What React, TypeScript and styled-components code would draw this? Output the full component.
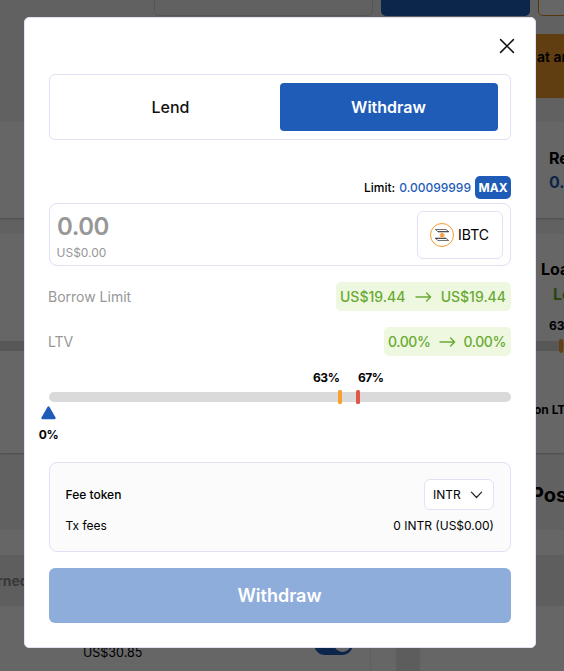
import React from "react";
import styled, { createGlobalStyle } from "styled-components";

const Global = createGlobalStyle`
  * { box-sizing: border-box; }
  html, body { margin: 0; padding: 0; overflow: hidden; }
  body { font-family: Inter, "Liberation Sans", sans-serif; color: #000; -webkit-font-smoothing: antialiased; }
  button { font-family: inherit; border: 0; padding: 0; margin: 0; background: none; color: inherit; }
`;

const blue = "#1f5cb8";
const line = "#dfe1f4";

/* ---------- page behind the dialog ---------- */
const Page = styled.div`
  width: 564px;
  height: 671px;
  overflow: hidden;
  background: #f3f3f3;
  display: flex;
  flex-direction: column;
`;
const TopBar = styled.div`
  height: 16px;
  flex: none;
  display: flex;
  padding-left: 154px;
  gap: 8px;
`;
const TopField = styled.div`
  width: 219px;
  flex: none;
  border: 1px solid #d5d5d5;
  border-top: 0;
  border-radius: 0 0 5px 5px;
`;
const TopButton = styled.div`
  width: 149px;
  flex: none;
  background: ${blue};
  border-radius: 0 0 5px 5px;
`;
const TopOutline = styled.div`
  width: 60px;
  flex: none;
  background: #fff;
  border: 1px solid #d98d25;
  border-top: 0;
  border-radius: 0 0 5px 5px;
`;
const Notice = styled.div`
  flex: none;
  margin: 18px 0 24px 380px;
  height: 64px;
  padding: 14px 0 0 157px;
  background: #f39b2b;
  font-size: 14px;
  line-height: 18px;
  font-weight: 600;
  white-space: nowrap;
`;
const Panel = styled.div<{ $h: number; $gap: number }>`
  flex: none;
  height: ${(p) => p.$h}px;
  margin-bottom: ${(p) => p.$gap}px;
  background: #fff;
  box-shadow: 0 1px 2px rgba(0, 0, 0, 0.25);
  white-space: nowrap;
  overflow: hidden;
`;
const PanelText = styled.div<{ $x: number; $top: number; $size: number; $color?: string }>`
  margin: ${(p) => p.$top}px 0 0 ${(p) => p.$x}px;
  font-size: ${(p) => p.$size}px;
  line-height: 20px;
  font-weight: 700;
  color: ${(p) => p.$color || "#000"};
`;
const PageTrack = styled.div`
  height: 10px;
  margin-top: 5px;
  background: #dadada;
  display: flex;
  align-items: center;
  padding-left: 559px;
`;
const PageMark = styled.div`
  width: 4px;
  height: 14px;
  flex: none;
  border-radius: 2px;
  background: #f7a02c;
`;
const Heading = styled.div`
  height: 77px;
  flex: none;
  padding: 30px 0 0 531px;
  font-size: 20px;
  line-height: 24px;
  font-weight: 700;
  white-space: nowrap;
`;
const TableTop = styled.div`
  height: 25px;
  flex: none;
  background: #fff;
`;
const TableHead = styled.div`
  height: 51px;
  flex: none;
  background: #ebebeb;
  color: #8c8c8c;
  font-size: 14px;
  line-height: 52px;
  font-weight: 700;
  text-indent: -3px;
`;
const TableBody = styled.div`
  flex: 1;
  display: flex;
`;
const AssetCell = styled.div`
  width: 371px;
  background: #fff;
  border-right: 1px solid #f0f0f0;
  display: flex;
  justify-content: space-between;
  padding: 35px 17px 0 83px;
  font-size: 12.5px;
  line-height: 24px;
`;
const Toggle = styled.div`
  width: 39px;
  height: 22px;
  margin-top: -8px;
  border-radius: 11px;
  background: ${blue};
  padding: 2px;
  display: flex;
  justify-content: flex-end;
`;
const Knob = styled.div`
  width: 17px;
  height: 17px;
  border-radius: 50%;
  background: #fff;
`;
const SideCell = styled.div`
  width: 25px;
  background: #fff;
`;
const Gutter = styled.div`
  width: 24px;
  background: #e9e9e9;
`;
const RestCell = styled.div`
  flex: 1;
  background: #fff;
`;

/* ---------- dialog ---------- */
const Overlay = styled.div`
  position: fixed;
  inset: 0;
  background: rgba(0, 0, 0, 0.6);
  padding: 17px 0 0 24px;
`;
const Dialog = styled.div`
  width: 512px;
  height: 631px;
  padding: 0 24px;
  background: #fff;
  border: 1px solid ${line};
  border-radius: 5px;
  display: flex;
  flex-direction: column;
`;
const DialogHeader = styled.div`
  height: 56px;
  flex: none;
  display: flex;
  justify-content: flex-end;
  padding-top: 20px;
  margin-right: -4px;
`;
const CloseButton = styled.button`
  width: 16px;
  height: 16px;
  svg { display: block; }
`;
const Tabs = styled.div`
  height: 66px;
  flex: none;
  display: grid;
  grid-template-columns: 1fr 1fr;
  padding: 8px 12px;
  border: 1px solid ${line};
  border-radius: 6px;
`;
const Tab = styled.button<{ $active?: boolean }>`
  border-radius: 4px;
  padding-right: 1px;
  font-size: 16px;
  font-weight: ${(p) => (p.$active ? 600 : 500)};
  color: ${(p) => (p.$active ? "#fff" : "#111")};
  background: ${(p) => (p.$active ? blue : "transparent")};
`;
const LimitRow = styled.div`
  height: 23px;
  flex: none;
  margin: 36px 0 4px;
  display: flex;
  justify-content: flex-end;
  align-items: center;
  gap: 4px;
  font-size: 12px;
  font-weight: 500;
`;
const LimitValue = styled.span`
  color: ${blue};
`;
const MaxButton = styled.button`
  width: 36px;
  height: 23px;
  border-radius: 5px;
  background: ${blue};
  color: #fff;
  font-size: 12px;
  font-weight: 700;
`;
const AmountBox = styled.div`
  height: 63px;
  flex: none;
  display: flex;
  justify-content: space-between;
  align-items: center;
  padding: 0 7px;
  border: 1px solid ${line};
  border-radius: 8px;
`;
const AmountFigures = styled.div`
  color: #979797;
  padding-top: 3px;
`;
const Amount = styled.div`
  font-size: 24px;
  line-height: 30px;
  font-weight: 600;
  letter-spacing: -0.5px;
`;
const Fiat = styled.div`
  font-size: 12px;
  line-height: 15px;
  margin: 3px 0 0 -0.5px;
`;
const TokenButton = styled.button`
  width: 86px;
  height: 48px;
  display: flex;
  align-items: center;
  gap: 4px;
  padding-left: 12px;
  border: 1px solid ${line};
  border-radius: 6px;
  font-size: 14px;
`;
const StatRow = styled.div<{ $top: number }>`
  height: 29px;
  flex: none;
  margin-top: ${(p) => p.$top}px;
  display: flex;
  justify-content: space-between;
  align-items: center;
  font-size: 14px;
  color: #979797;
`;
const StatLabel = styled.span`
  margin-left: -1px;
`;
const Change = styled.div<{ $w: number; $tracking?: number }>`
  width: ${(p) => p.$w}px;
  height: 29px;
  display: flex;
  align-items: center;
  justify-content: space-between;
  padding: 0 5px 0 4px;
  border-radius: 5px;
  background: #eef8e1;
  color: #6aaa33;
  font-weight: 500;
  letter-spacing: ${(p) => p.$tracking || 0}px;
`;
const Meter = styled.div`
  height: 106px;
  flex: none;
  padding-top: 36px;
  position: relative;
  font-size: 12px;
  line-height: 16px;
  font-weight: 700;
  letter-spacing: -0.45px;
`;
const Track = styled.div`
  height: 10px;
  border-radius: 5px;
  background: #dadada;
`;
const Mark = styled.div<{ $at: number; $color: string }>`
  position: absolute;
  top: 34px;
  left: ${(p) => p.$at}%;
  width: 4px;
  height: 14px;
  margin-left: -2px;
  border-radius: 1.5px;
  background: ${(p) => p.$color};
`;
const MarkLabel = styled.div<{ $x: number }>`
  position: absolute;
  top: 14px;
  left: ${(p) => p.$x}px;
`;
const Pointer = styled.div`
  position: absolute;
  left: -20.5px;
  top: 50px;
  width: 40px;
  display: flex;
  flex-direction: column;
  align-items: center;
  gap: 7px;
  svg { display: block; }
`;
const FeeBox = styled.div`
  height: 90px;
  flex: none;
  padding: 16px 16px 16px 15.5px;
  border: 1px solid ${line};
  border-radius: 8px;
  background: #fbfbfb;
  font-size: 12px;
`;
const FeeRow = styled.div<{ $h: number; $weight: number }>`
  height: ${(p) => p.$h}px;
  display: flex;
  align-items: center;
  justify-content: space-between;
  font-weight: ${(p) => p.$weight};
`;
const FeeSelect = styled.button`
  width: 70px;
  height: 31px;
  display: flex;
  align-items: center;
  justify-content: space-between;
  padding: 0 10px 0 8px;
  border: 1px solid ${line};
  border-radius: 6px;
  background: #fff;
  font-size: 12px;
`;
const Submit = styled.button`
  height: 55px;
  flex: none;
  margin-top: 16px;
  padding-right: 1px;
  border-radius: 6px;
  background: #8faddb;
  color: #fff;
  font-size: 18px;
  font-weight: 600;
`;

const Arrow = () => (
  <svg width="17" height="10" viewBox="0 0 17 10" fill="none" stroke="currentColor" strokeWidth="1.4" strokeLinecap="round" strokeLinejoin="round">
    <path d="M1 5H15.6M11.6 1L15.6 5L11.6 9" />
  </svg>
);

const TokenIcon = () => (
  <svg width="24" height="24" viewBox="0 0 24 24" fill="none">
    <circle cx="12" cy="12" r="11.5" stroke="#f39a2d" />
    <path d="M5.3 6.5H16L18.7 8.7H8Z" stroke="#333" strokeWidth=".7" />
    <path d="M8 8.7H18.7" stroke="#222" strokeWidth=".7" />
    <path d="M5.3 15.3H16L18.7 17.5H8Z" stroke="#333" strokeWidth=".7" />
    <path d="M5.3 15.3H16" stroke="#222" strokeWidth=".7" />
    <circle cx="12.2" cy="12.2" r="2.5" fill="#f7bc73" />
    <path d="M11.3 10.8V13.7M11.3 10.8H12.7Q13.8 11.5 12.6 12.2H11.3M12.6 12.2Q14 13 12.7 13.7H11.3" stroke="#e9861a" strokeWidth=".6" />
  </svg>
);

export default function App() {
  return (
    <>
      <Global />
      <Page>
        <TopBar>
          <TopField />
          <TopButton />
          <TopOutline />
        </TopBar>
        <Notice>at any</Notice>
        <Panel $h={96} $gap={16}>
          <PanelText $x={549} $top={26} $size={16}>Rewards</PanelText>
          <PanelText $x={549} $top={4} $size={16} $color={blue}>0.00</PanelText>
        </Panel>
        <Panel $h={219} $gap={0}>
          <PanelText $x={541} $top={25} $size={16}>Loan</PanelText>
          <PanelText $x={553} $top={5} $size={16} $color="#6aaa33">Low</PanelText>
          <PanelText $x={549} $top={12} $size={12}>63%</PanelText>
          <PageTrack><PageMark /></PageTrack>
          <PanelText $x={534} $top={49} $size={12}>on LTV</PanelText>
        </Panel>
        <Heading>Positions</Heading>
        <TableTop />
        <TableHead>rned</TableHead>
        <TableBody>
          <AssetCell>
            <span>US$30.85</span>
            <Toggle><Knob /></Toggle>
          </AssetCell>
          <SideCell />
          <Gutter />
          <RestCell />
        </TableBody>
      </Page>

      <Overlay>
        <Dialog role="dialog">
          <DialogHeader>
            <CloseButton aria-label="Close">
              <svg width="16" height="16" viewBox="0 0 16 16" stroke="#111" strokeWidth="1.5" strokeLinecap="round">
                <path d="M1.6 1.6L14.4 14.4M14.4 1.6L1.6 14.4" />
              </svg>
            </CloseButton>
          </DialogHeader>
          <Tabs>
            <Tab>Lend</Tab>
            <Tab $active>Withdraw</Tab>
          </Tabs>
          <LimitRow>
            <span>Limit:</span>
            <LimitValue>0.00099999</LimitValue>
            <MaxButton>MAX</MaxButton>
          </LimitRow>
          <AmountBox>
            <AmountFigures>
              <Amount>0.00</Amount>
              <Fiat>US$0.00</Fiat>
            </AmountFigures>
            <TokenButton>
              <TokenIcon />
              IBTC
            </TokenButton>
          </AmountBox>
          <StatRow $top={16}>
            <StatLabel>Borrow Limit</StatLabel>
            <Change $w={175}>
              <span>US$19.44</span>
              <Arrow />
              <span>US$19.44</span>
            </Change>
          </StatRow>
          <StatRow $top={16}>
            <StatLabel>LTV</StatLabel>
            <Change $w={127} $tracking={-0.4}>
              <span>0.00%</span>
              <Arrow />
              <span>0.00%</span>
            </Change>
          </StatRow>
          <Meter>
            <MarkLabel $x={264}>63%</MarkLabel>
            <MarkLabel $x={309}>67%</MarkLabel>
            <Track />
            <Mark $at={63} $color="#f7a02c" />
            <Mark $at={66.9} $color="#e2564a" />
            <Pointer>
              <svg width="15" height="14" viewBox="0 0 15 14">
                <path d="M7.5 1.5L13.5 12H1.5Z" fill={blue} stroke={blue} strokeWidth="2.4" strokeLinejoin="round" />
              </svg>
              <span>0%</span>
            </Pointer>
          </Meter>
          <FeeBox>
            <FeeRow $h={31} $weight={500}>
              <span>Fee token</span>
              <FeeSelect>
                INTR
                <svg width="13" height="8" viewBox="0 0 13 8" fill="none" stroke="#222" strokeWidth="1.2" strokeLinecap="round" strokeLinejoin="round">
                  <path d="M1.4 1.2L6.5 6.5L11.6 1.2" />
                </svg>
              </FeeSelect>
            </FeeRow>
            <FeeRow $h={31} $weight={400}>
              <span>Tx fees</span>
              <span>0 INTR (US$0.00)</span>
            </FeeRow>
          </FeeBox>
          <Submit>Withdraw</Submit>
        </Dialog>
      </Overlay>
    </>
  );
}
